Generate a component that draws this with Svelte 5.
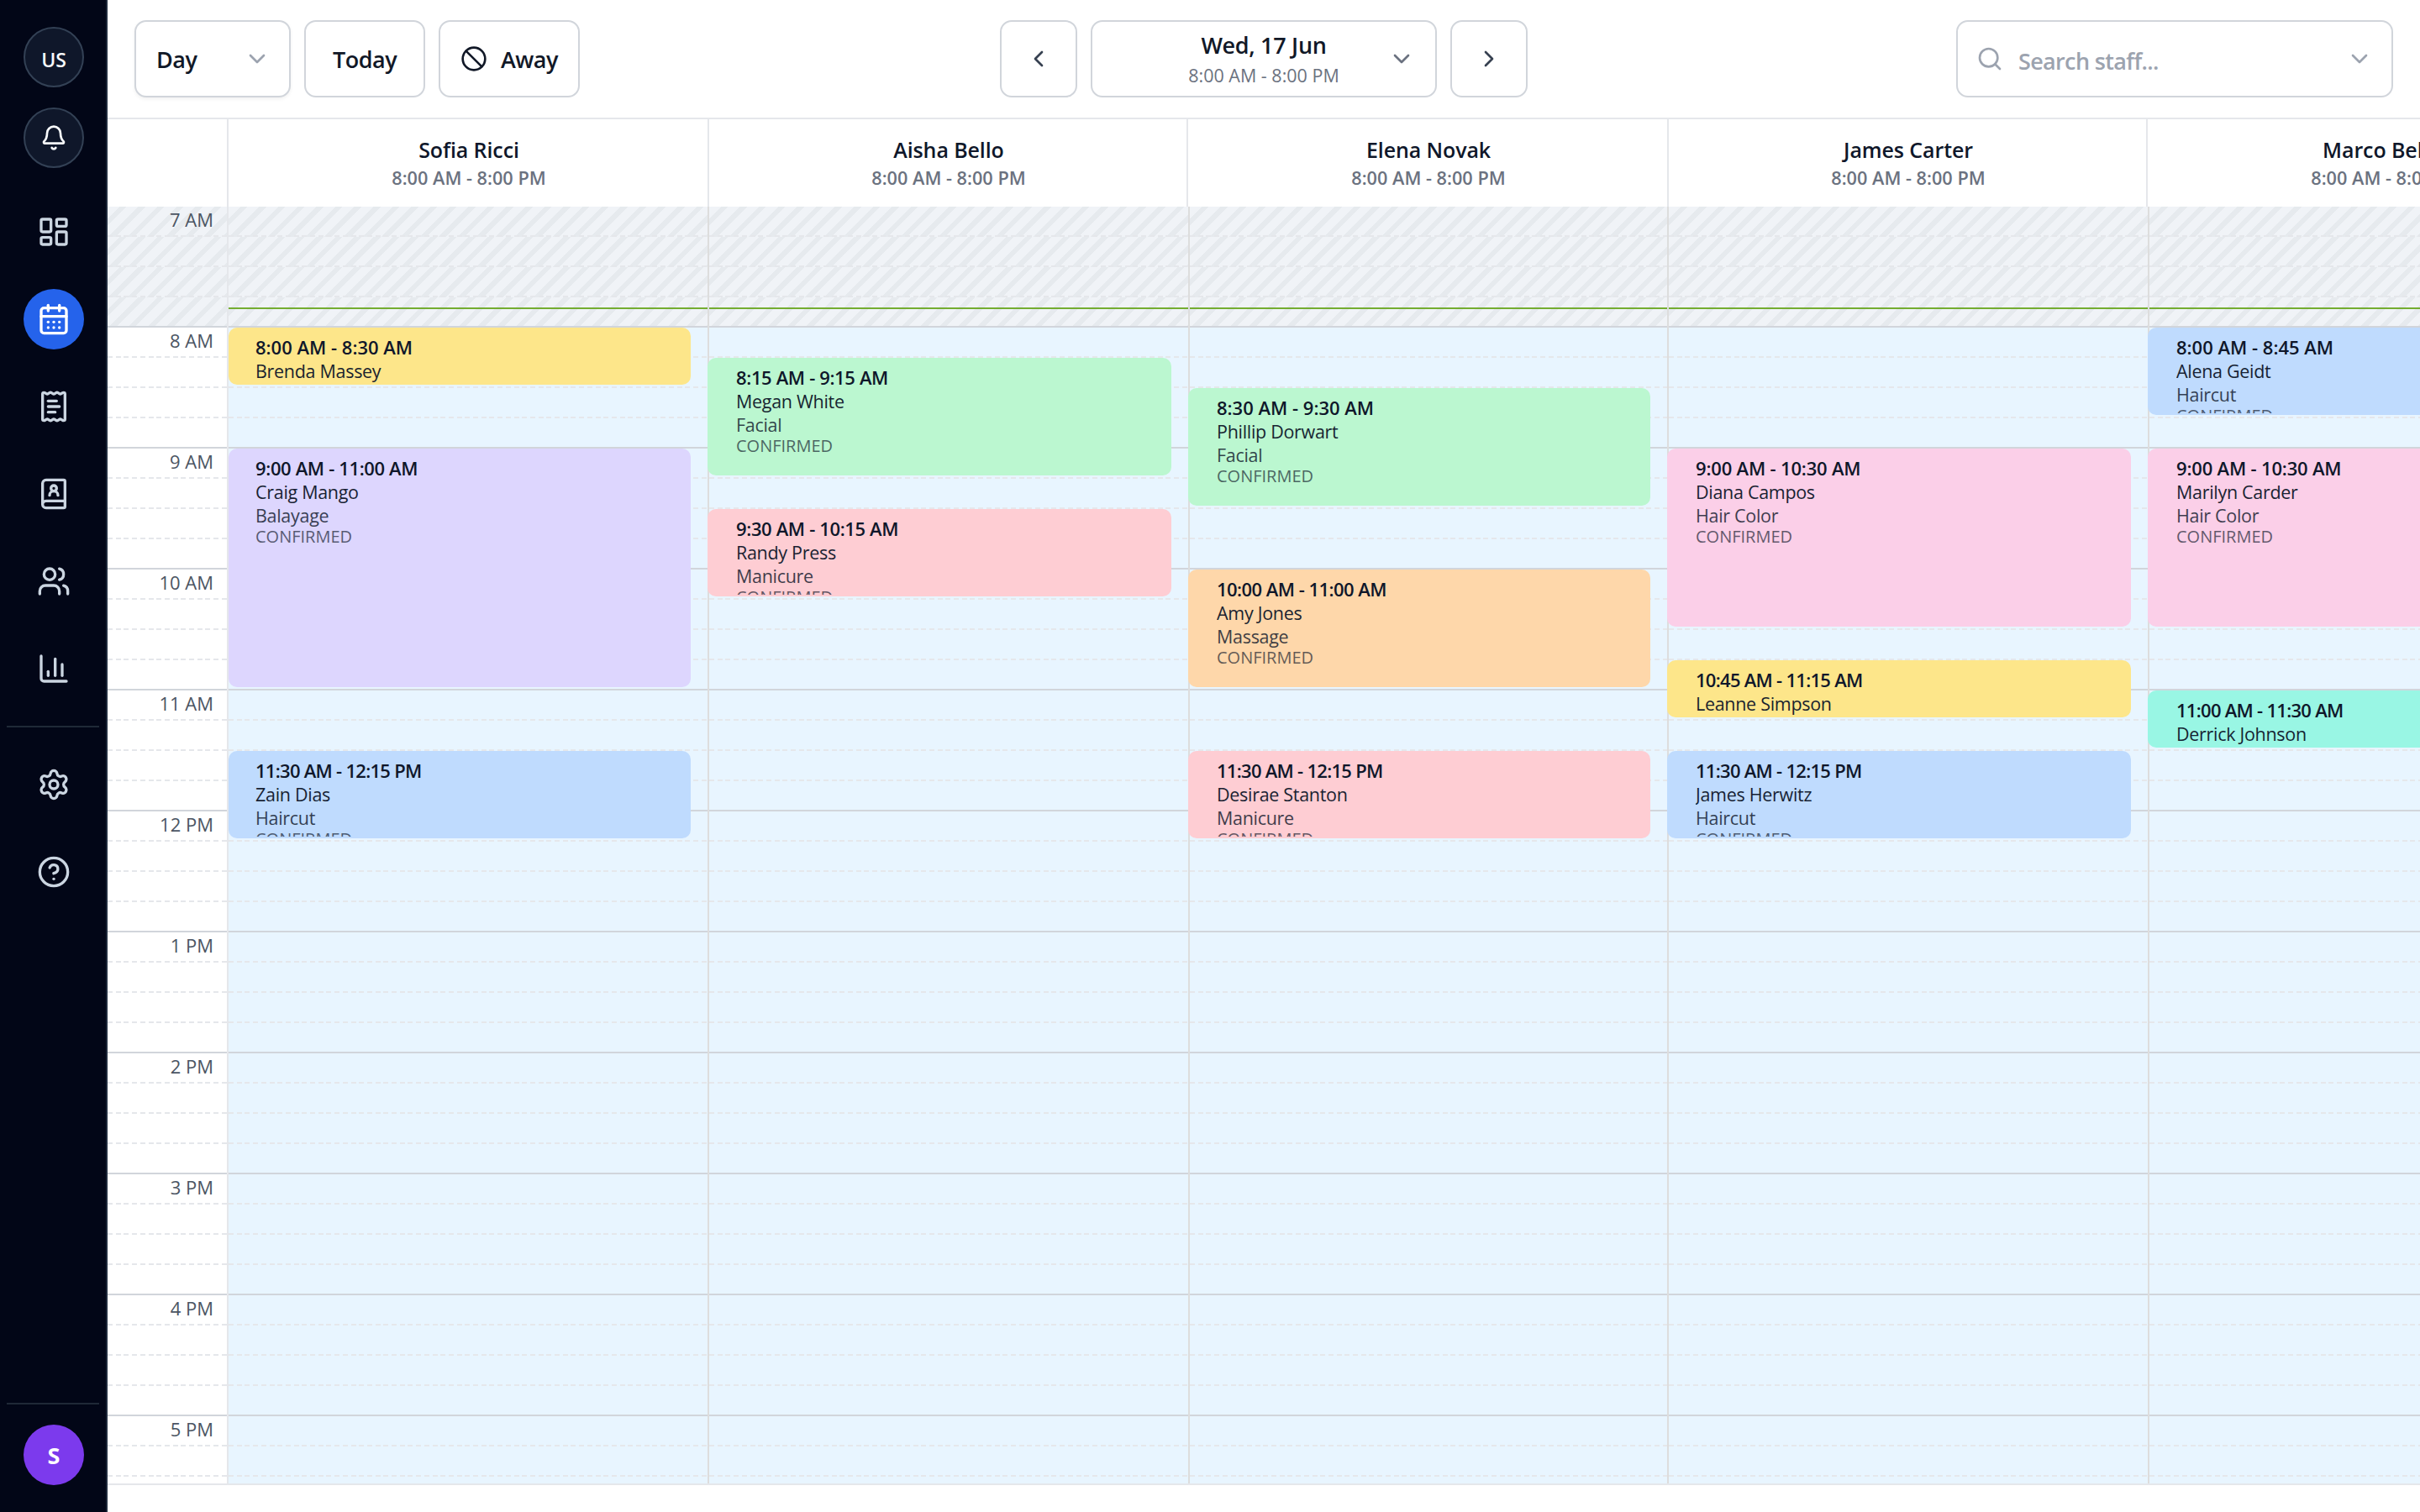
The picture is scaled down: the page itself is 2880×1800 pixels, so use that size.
<script>
  const icons = {
    bell: ['M10.268 21a2 2 0 0 0 3.464 0', 'M3.262 15.326A1 1 0 0 0 4 17h16a1 1 0 0 0 .74-1.673C19.41 13.956 18 12.499 18 8A6 6 0 0 0 6 8c0 4.499-1.411 5.956-2.738 7.326'],
    dashboard: ['M4 3h5a1 1 0 0 1 1 1v7a1 1 0 0 1-1 1H4a1 1 0 0 1-1-1V4a1 1 0 0 1 1-1z', 'M15 3h5a1 1 0 0 1 1 1v3a1 1 0 0 1-1 1h-5a1 1 0 0 1-1-1V4a1 1 0 0 1 1-1z', 'M15 12h5a1 1 0 0 1 1 1v7a1 1 0 0 1-1 1h-5a1 1 0 0 1-1-1v-7a1 1 0 0 1 1-1z', 'M4 16h5a1 1 0 0 1 1 1v3a1 1 0 0 1-1 1H4a1 1 0 0 1-1-1v-3a1 1 0 0 1 1-1z'],
    calendar: ['M8 2v4', 'M16 2v4', 'M5 4h14a2 2 0 0 1 2 2v14a2 2 0 0 1-2 2H5a2 2 0 0 1-2-2V6a2 2 0 0 1 2-2z', 'M3 10h18', 'M8 14h.01', 'M12 14h.01', 'M16 14h.01', 'M8 18h.01', 'M12 18h.01', 'M16 18h.01'],
    receipt: ['M13 16H8', 'M14 8H8', 'M16 12H8', 'M4 3a1 1 0 0 1 1-1 1.3 1.3 0 0 1 .7.2l.933.6a1.3 1.3 0 0 0 1.4 0l.934-.6a1.3 1.3 0 0 1 1.4 0l.933.6a1.3 1.3 0 0 0 1.4 0l.933-.6a1.3 1.3 0 0 1 1.4 0l.934.6a1.3 1.3 0 0 0 1.4 0l.933-.6A1.3 1.3 0 0 1 19 2a1 1 0 0 1 1 1v18a1 1 0 0 1-1 1 1.3 1.3 0 0 1-.7-.2l-.933-.6a1.3 1.3 0 0 0-1.4 0l-.934.6a1.3 1.3 0 0 1-1.4 0l-.933-.6a1.3 1.3 0 0 0-1.4 0l-.933.6a1.3 1.3 0 0 1-1.4 0l-.934-.6a1.3 1.3 0 0 0-1.4 0l-.933.6a1.3 1.3 0 0 1-.7.2 1 1 0 0 1-1-1z'],
    contact: ['M15 13a3 3 0 1 0-6 0', 'M4 19.5v-15A2.5 2.5 0 0 1 6.5 2H19a1 1 0 0 1 1 1v18a1 1 0 0 1-1 1H6.5a1 1 0 0 1 0-5H20', 'M14 8a2 2 0 1 1-4 0a2 2 0 1 1 4 0'],
    users: ['M16 21v-2a4 4 0 0 0-4-4H6a4 4 0 0 0-4 4v2', 'M16 3.128a4 4 0 0 1 0 7.744', 'M22 21v-2a4 4 0 0 0-3-3.87', 'M13 7a4 4 0 1 1-8 0a4 4 0 1 1 8 0'],
    chart: ['M3 3v16a2 2 0 0 0 2 2h16', 'M18 17V9', 'M13 17V5', 'M8 17v-3'],
    settings: ['M9.671 4.136a2.34 2.34 0 0 1 4.659 0 2.34 2.34 0 0 0 3.319 1.915 2.34 2.34 0 0 1 2.33 4.033 2.34 2.34 0 0 0 0 3.831 2.34 2.34 0 0 1-2.33 4.033 2.34 2.34 0 0 0-3.319 1.915 2.34 2.34 0 0 1-4.659 0 2.34 2.34 0 0 0-3.32-1.915 2.34 2.34 0 0 1-2.33-4.033 2.34 2.34 0 0 0 0-3.831A2.34 2.34 0 0 1 6.35 6.051a2.34 2.34 0 0 0 3.319-1.915', 'M15 12a3 3 0 1 1-6 0a3 3 0 1 1 6 0'],
    help: ['M22 12a10 10 0 1 1-20 0a10 10 0 1 1 20 0', 'M9.09 9a3 3 0 0 1 5.83 1c0 2-3 3-3 3', 'M12 17h.01'],
    ban: ['M22 12a10 10 0 1 1-20 0a10 10 0 1 1 20 0', 'M4.929 4.929 19.07 19.071'],
    down: ['m6 9 6 6 6-6'],
    left: ['m15 18-6-6 6-6'],
    right: ['m9 18 6-6-6-6'],
    search: ['M19 11a8 8 0 1 1-16 0a8 8 0 1 1 16 0', 'm21 21-4.34-4.34'],
  };

  const mainNav = ['dashboard', 'calendar', 'receipt', 'contact', 'users', 'chart'];
  const moreNav = ['settings', 'help'];

  const hours = ['7 AM', '8 AM', '9 AM', '10 AM', '11 AM', '12 PM', '1 PM', '2 PM', '3 PM', '4 PM', '5 PM'];
  const quarters = [0, 1, 2, 3];
  const OPENING = 7 * 60;
  const PX_PER_MINUTE = 2.4;

  const services = {
    Manicure: 'rose', Haircut: 'blue', Balayage: 'violet', Facial: 'green',
    Massage: 'orange', 'Hair Color': 'pink', Brows: 'yellow', Waxing: 'teal',
  };

  const staff = [
    { name: 'Sofia Ricci', bookings: [
      ['8:00 AM', '8:30 AM', 'Brenda Massey', 'Brows'],
      ['9:00 AM', '11:00 AM', 'Craig Mango', 'Balayage'],
      ['11:30 AM', '12:15 PM', 'Zain Dias', 'Haircut'],
    ] },
    { name: 'Aisha Bello', bookings: [
      ['8:15 AM', '9:15 AM', 'Megan White', 'Facial'],
      ['9:30 AM', '10:15 AM', 'Randy Press', 'Manicure'],
    ] },
    { name: 'Elena Novak', bookings: [
      ['8:30 AM', '9:30 AM', 'Phillip Dorwart', 'Facial'],
      ['10:00 AM', '11:00 AM', 'Amy Jones', 'Massage'],
      ['11:30 AM', '12:15 PM', 'Desirae Stanton', 'Manicure'],
    ] },
    { name: 'James Carter', bookings: [
      ['9:00 AM', '10:30 AM', 'Diana Campos', 'Hair Color'],
      ['10:45 AM', '11:15 AM', 'Leanne Simpson', 'Brows'],
      ['11:30 AM', '12:15 PM', 'James Herwitz', 'Haircut'],
    ] },
    { name: 'Marco Bellini', bookings: [
      ['8:00 AM', '8:45 AM', 'Alena Geidt', 'Haircut'],
      ['9:00 AM', '10:30 AM', 'Marilyn Carder', 'Hair Color'],
      ['11:00 AM', '11:30 AM', 'Derrick Johnson', 'Waxing'],
    ] },
  ];

  function minutes(label) {
    const [clock, half] = label.split(' ');
    const [h, m] = clock.split(':').map(Number);
    return ((h % 12) + (half === 'PM' ? 12 : 0)) * 60 + m;
  }
  const offset = (label) => (minutes(label) - OPENING) * PX_PER_MINUTE;
  const span = (from, to) => (minutes(to) - minutes(from)) * PX_PER_MINUTE - 4;

  const tracking = (from, to) => -0.18 * (from + to).split('1').slice(1).length;
</script>

{#snippet icon(name, size)}
  <svg class="icon {size}" viewBox="0 0 24 24" aria-hidden="true">
    {#each icons[name] as d}<path {d} />{/each}
  </svg>
{/snippet}

<div class="app">
  <nav class="sidebar">
    <div class="badges">
      <button class="round dark"><span>US</span></button>
      <button class="round dark">{@render icon('bell', 'md')}</button>
    </div>
    <div class="links">
      {#each mainNav as item}
        <button class="round link" class:active={item === 'calendar'}>{@render icon(item, 'lg')}</button>
      {/each}
    </div>
    <hr />
    <div class="links more">
      {#each moreNav as item}
        <button class="round link">{@render icon(item, 'lg')}</button>
      {/each}
    </div>
    <div class="account">
      <hr />
      <button class="round avatar">S</button>
    </div>
  </nav>

  <main>
    <header class="toolbar">
      <div class="group start">
        <button class="control view"><span>Day</span>{@render icon('down', 'md')}</button>
        <button class="control today">Today</button>
        <button class="control away">{@render icon('ban', 'md')}<span>Away</span></button>
      </div>
      <div class="group">
        <button class="control step">{@render icon('left', 'md')}</button>
        <button class="control date">
          <span class="stack">
            <span class="day">Wed, 17 Jun</span>
            <span class="range">8:00 AM - 8:00 PM</span>
          </span>
          {@render icon('down', 'md')}
        </button>
        <button class="control step">{@render icon('right', 'md')}</button>
      </div>
      <div class="group end">
        <div class="control search">
          {@render icon('search', 'md')}
          <span class="placeholder">Search staff...</span>
          {@render icon('down', 'md')}
        </div>
      </div>
    </header>

    <div class="heads">
      <div class="corner"></div>
      {#each staff as person}
        <div class="head">
          <div class="name">{person.name}</div>
          <div class="shift">8:00 AM - 8:00 PM</div>
        </div>
      {/each}
    </div>

    <div class="body">
      <div class="gutter">
        {#each hours as hour, h}
          <div class="hour">
            {#each quarters as q}
              <div class="slot" class:closed={h === 0}>{#if q === 0}<span>{hour}</span>{/if}</div>
            {/each}
          </div>
        {/each}
      </div>
      {#each staff as person}
        <div class="column">
          {#each hours as _, h}
            <div class="hour">
              {#each quarters as q}<div class="slot" class:closed={h === 0}></div>{/each}
            </div>
          {/each}
          <div class="now"></div>
          {#each person.bookings as [from, to, client, service]}
            <article class="event {services[service]}" style="top: {offset(from)}px; height: {span(from, to)}px">
              <div class="clip">
                <div class="time" style="letter-spacing: {tracking(from, to)}px">{from} - {to}</div>
                <div class="client">{client}</div>
                {#if minutes(to) - minutes(from) > 30}
                  <div class="service">{service}</div>
                  <div class="status">CONFIRMED</div>
                {/if}
              </div>
            </article>
          {/each}
        </div>
      {/each}
    </div>
  </main>
</div>

<style>
  :global(body) { margin: 0; background: #fff; overflow: hidden; }
  * { box-sizing: border-box; }
  .app {
    display: flex; width: 2880px; height: 1800px; overflow: hidden;
    font-family: 'Open Sans', 'Noto Sans', sans-serif; color: #0f172a; background: #fff;
  }
  button { font: inherit; color: inherit; margin: 0; padding: 0; cursor: pointer; }
  .icon { flex: none; display: block; fill: none; stroke: currentColor; stroke-width: 2; stroke-linecap: round; stroke-linejoin: round; }
  .md { width: 32px; height: 32px; }
  .lg { width: 40px; height: 40px; }

  .sidebar {
    flex: none; width: 128px; height: 1800px; padding: 32px 8px 32px 8px;
    display: flex; flex-direction: column; background: #020617; border-right: 2px solid #1e293b;
  }
  .round {
    width: 72px; height: 72px; border-radius: 50%; border: 0; background: none;
    display: flex; align-items: center; justify-content: center; margin-left: 20px;
  }
  .badges { display: flex; flex-direction: column; gap: 24px; }
  .dark { background: #0f172a; border: 2px solid #334155; color: #f8fafc; font-size: 23px; font-weight: 600; }
  .dark span { padding-top: 5px; }
  .links { display: flex; flex-direction: column; gap: 32px; margin-top: 40px; }
  .link { color: #cbd5e1; }
  .active { background: #2563eb; color: #fff; }
  hr { width: 110px; height: 2px; margin: 32px 0 0; border: 0; background: #1f2937; }
  .more { margin-top: 32px; }
  .account { margin-top: auto; }
  .account hr { margin: 0 0 24px; }
  .avatar { background: #7c3aed; color: #fff; font-size: 27px; font-weight: 700; }

  main { flex: 1; min-width: 0; display: flex; flex-direction: column; overflow: hidden; }
  .toolbar {
    flex: none; height: 142px; padding: 24px 32px; border-bottom: 2px solid #e5e7eb;
    display: grid; grid-template-columns: 1fr auto 1fr;
  }
  .group { display: flex; gap: 16px; }
  .end { justify-content: flex-end; }
  .control {
    height: 92px; border: 2px solid #d1d5db; border-radius: 14px; background: #fff;
    display: flex; align-items: center; font-size: 27px; font-weight: 600; letter-spacing: -0.5px; color: #111827;
  }
  .view { width: 186px; padding: 0 22px 0 24px; justify-content: space-between; box-shadow: 0 2px 4px rgb(0 0 0 / 0.06); }
  .view .icon { color: #9ca3af; }
  .today { width: 144px; justify-content: center; }
  .away { width: 168px; padding-left: 24px; gap: 16px; }
  .step { width: 92px; justify-content: center; color: #374151; }
  .date { width: 412px; padding: 0 24px 0 56px; }
  .date .icon { color: #6b7280; }
  .stack { flex: 1; display: flex; flex-direction: column; align-items: center; padding-top: 1px; }
  .day { font-size: 27px; line-height: 36px; letter-spacing: -0.3px; }
  .range { font-size: 21.5px; line-height: 36px; margin-bottom: -2px; font-weight: 400; letter-spacing: 0; color: #6b7280; }
  .control.search { width: 520px; padding: 0 22px; color: #9ca3af; }
  .placeholder { flex: 1; margin-left: 18px; padding-top: 4px; font-weight: 600; letter-spacing: -0.65px; }

  .heads { flex: none; display: grid; grid-template-columns: 144px 572px 570px 572px 570px 572px; height: 104px; }
  .corner, .head { border-right: 2px solid #e5e7eb; }
  .head { padding: 19px 0 0 2px; text-align: center; white-space: nowrap; }
  .name { font-size: 25px; line-height: 34px; margin-bottom: 2px; font-weight: 600; letter-spacing: -0.1px; }
  .shift { font-size: 21.7px; line-height: 29px; font-weight: 600; color: #6b7280; }

  .body {
    flex: none; height: 1522px; overflow: hidden; border-bottom: 2px solid #e5e7eb;
    display: grid; grid-template-columns: 144px 570px 572px 570px 572px 572px; align-items: start;
  }
  .slot {
    --dash: repeating-linear-gradient(90deg, #e5e7eb 0 6px, transparent 6px 9.7px) left bottom / 100% 2px no-repeat;
    height: 36px; background: var(--dash);
  }
  .column .slot { background: var(--dash), #e8f5ff; }
  .slot.closed, .column .slot.closed {
    background: var(--dash), repeating-linear-gradient(135deg, #f0f3f7 0 10px, #e6eaee 10px 16px);
  }
  .slot:last-child { border-bottom: 2px solid #d1d5db; --dash: linear-gradient(transparent, transparent); }
  .gutter { border-right: 2px solid #e5e7eb; }
  .gutter .slot { text-align: right; padding-right: 16px; font-size: 22px; line-height: 30px; color: #4b5563; }
  .column { position: relative; }
  .column + .column { border-left: 2px solid #ddd; }
  .now { position: absolute; left: 0; right: 0; top: 120px; height: 2px; background: #74ad31; }

  .event { position: absolute; left: 0; right: 20px; border-radius: 10px; padding: 2px 32px; }
  .column + .column .event { left: -2px; padding-left: 34px; }
  .clip { height: 100%; overflow: hidden; padding-top: 8px; white-space: nowrap; }
  .time { font-size: 22px; line-height: 26px; margin-bottom: 2px; font-weight: 600; }
  .client { font-size: 21.5px; line-height: 28px; letter-spacing: -0.3px; opacity: 0.95; }
  .service { font-size: 21.5px; line-height: 28px; letter-spacing: -0.3px; opacity: 0.8; }
  .status { font-size: 20px; line-height: 21px; opacity: 0.65; }
  .yellow { background: #fde68a; }
  .violet { background: #ddd6fe; }
  .blue { background: #bfdbfe; }
  .green { background: #bbf7d0; }
  .rose { background: #fecdd3; }
  .orange { background: #fed7aa; }
  .pink { background: #fbcfe8; }
  .teal { background: #99f6e4; }
</style>
